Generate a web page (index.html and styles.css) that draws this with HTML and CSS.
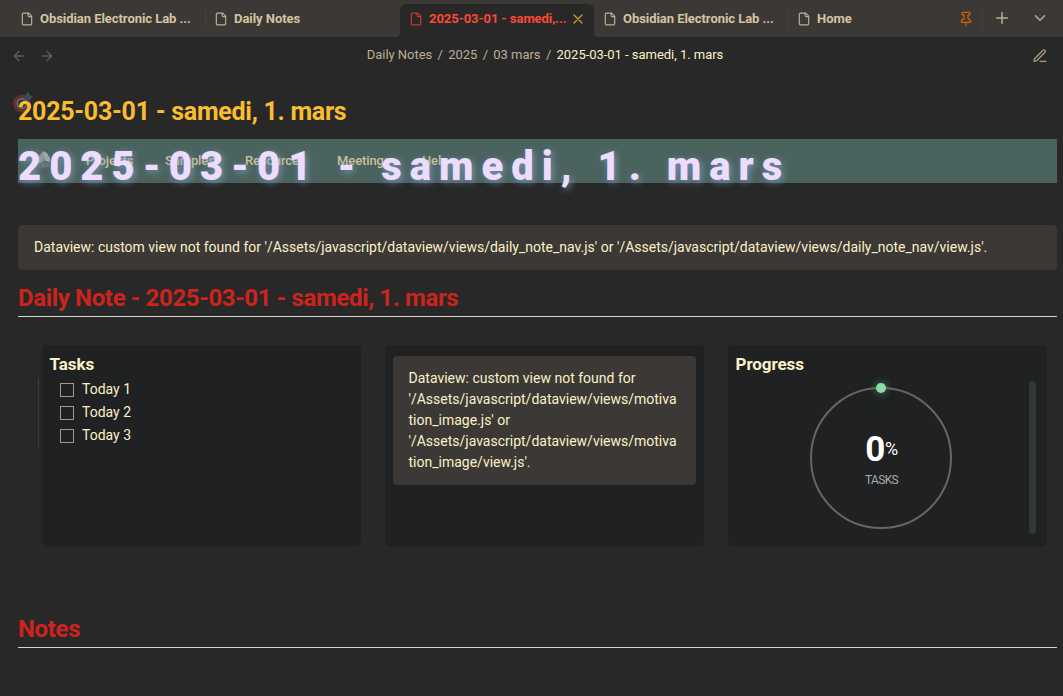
FILE: index.html
```
<!DOCTYPE html>
<html lang="fr">
<head>
<meta charset="utf-8">
<title>2025-03-01 - samedi, 1. mars</title>
<link rel="stylesheet" href="styles.css">
</head>
<body>
<svg class="sprite" aria-hidden="true">
  <symbol id="file" viewBox="0 0 24 24"><path d="M15 2H6a2 2 0 0 0-2 2v16a2 2 0 0 0 2 2h12a2 2 0 0 0 2-2V7Z"/><path d="M14 2v4a2 2 0 0 0 2 2h4"/></symbol>
</svg>
<div class="app">
  <header class="tabs">
    <div class="tab t1"><svg class="icon"><use href="#file"/></svg><span>Obsidian Electronic Lab ...</span></div>
    <div class="tab t2"><svg class="icon"><use href="#file"/></svg><span>Daily Notes</span></div>
    <div class="tab t3 active"><svg class="icon"><use href="#file"/></svg><span>2025-03-01 - samedi,...</span><svg class="close" viewBox="0 0 24 24"><path d="M18 6 6 18M6 6l12 12"/></svg></div>
    <div class="tab t4"><svg class="icon"><use href="#file"/></svg><span>Obsidian Electronic Lab ...</span></div>
    <div class="tab t5"><svg class="icon"><use href="#file"/></svg><span>Home</span><svg class="pin" viewBox="0 0 24 24"><path d="M12 17v5M9 10.76a2 2 0 0 1-1.11 1.79l-1.78.9A2 2 0 0 0 5 15.24V16a1 1 0 0 0 1 1h12a1 1 0 0 0 1-1v-.76a2 2 0 0 0-1.11-1.79l-1.78-.9A2 2 0 0 1 15 10.76V7a1 1 0 0 1 1-1 2 2 0 0 0 0-4H8a2 2 0 0 0 0 4 1 1 0 0 1 1 1z"/></svg></div>
    <div class="tab-tools"><svg class="plus" viewBox="0 0 24 24"><path d="M5 12h14M12 5v14"/></svg><svg class="chevron" viewBox="0 0 24 24"><path d="m6 9 6 6 6-6"/></svg></div>
  </header>
  <nav class="view-header">
    <div class="history"><svg viewBox="0 0 24 24"><path d="m12 19-7-7 7-7M19 12H5"/></svg><svg viewBox="0 0 24 24"><path d="M5 12h14M12 5l7 7-7 7"/></svg></div>
    <div class="crumbs"><span>Daily Notes</span><i>/</i><span>2025</span><i>/</i><span>03 mars</span><i>/</i><b>2025-03-01 - samedi, 1. mars</b></div>
    <div class="actions"><svg class="edit" viewBox="0 0 24 24"><path d="M12 20h9M16.5 3.5a2.12 2.12 0 0 1 3 3L7 19l-4 1 1-4Z"/></svg></div>
  </nav>
  <main class="note">
    <div class="title-wrap">
      <svg class="target" viewBox="0 0 22 22"><circle cx="9" cy="12.500" r="7.500" fill="none" stroke="#66302e" stroke-width="3"/><circle cx="9" cy="12.500" r="4.700" fill="none" stroke="#6c6867" stroke-width="2"/><circle cx="9" cy="12.500" r="2.500" fill="#66302e"/><path d="m9 12 6-6" stroke="#365b70" stroke-width="1.500"/><path d="m12 8 1-5 3-2v3l4 1-3 4z" fill="#31506a"/></svg>
      <h1 class="title">2025-03-01 - samedi, 1. mars</h1>
    </div>
    <div class="banner">
      <div class="menu">
        <svg class="logo" viewBox="0 0 14 18"><path d="M1 8 6 1l2 4-1 6-5 3z" fill="#8c9895"/><path d="m6 1 4 2 3 5v4l-5-1-1-5z" fill="#a0a8a6"/><path d="m4 14 4-2 5 1-1 4-7 1z" fill="#6c7275"/></svg>
        <span class="m1">Projects</span><span class="m2">Samples</span><span class="m3">Resources</span><span class="m4">Meetings</span><span class="m5">Help</span>
      </div>
      <div class="display">2025-03-01 - samedi, 1. mars</div>
    </div>
    <div class="error wide">Dataview: custom view not found for '/Assets/javascript/dataview/views/daily_note_nav.js' or '/Assets/javascript/dataview/views/daily_note_nav/view.js'.</div>
    <h2 class="section daily">Daily Note - 2025-03-01 - samedi, 1. mars</h2>
    <div class="columns">
      <section class="card tasks"><h3>Tasks</h3>
        <ul><li><span class="box"></span><span>Today 1</span></li><li><span class="box"></span><span>Today 2</span></li><li><span class="box"></span><span>Today 3</span></li></ul>
      </section>
      <section class="card motivation"><div class="error small">Dataview: custom view not found for '/Assets/javascript/dataview/views/motivation_image.js' or '/Assets/javascript/dataview/views/motivation_image/view.js'.</div></section>
      <section class="card progress"><h3>Progress</h3>
        <div class="progress-body">
          <div class="ring"><span class="dot"></span><div class="value"><strong>0</strong><span>%</span></div><div class="label">TASKS</div></div>
          <div class="scrollbar"></div>
        </div>
      </section>
    </div>
    <h2 class="section notes">Notes</h2>
  </main>
</div>
</body>
</html>
```
FILE: styles.css
```
* { box-sizing: border-box; }
body { margin: 0; background: #282828; color: #fbf1c7; font-family: Roboto, sans-serif; font-size: 14px; overflow: hidden; }
svg { fill: none; stroke: currentColor; stroke-width: 2; stroke-linecap: round; stroke-linejoin: round; flex: none; }
.sprite { position: absolute; width: 0; height: 0; }
.app { height: 696px; overflow: hidden; }
.tabs { display: flex; height: 37px; background: #3c3836; color: #d5c4a1; font-size: 13px; font-weight: 700; letter-spacing: -0.050px; }
.tab { display: flex; align-items: center; height: 37px; position: relative; white-space: nowrap; }
.icon { width: 14px; height: 14px; margin-right: 6px; color: #bdae93; }
.t1 { width: 206px; padding-left: 20px; }
.t2 { width: 194px; padding-left: 8px; }
.t3 { width: 194px; padding-left: 9px; }
.t4 { width: 195px; padding-left: 9px; }
.t5 { width: 194px; padding-left: 8px; }
.t1::before, .t4::before, .t5::before { content: ""; position: absolute; right: 0; top: 10px; width: 1px; height: 19px; background: #45403d; }
.active { height: 33px; margin-top: 4px; padding-bottom: 4px; background: #282828; border-radius: 6px 6px 0 0; color: #fb4934; }
.active::before, .active::after { content: ""; position: absolute; bottom: 0; width: 5px; height: 5px; }
.active::before { left: -5px; background: radial-gradient(circle at 0 0, #3c3836 5px, #282828 5.500px); }
.active::after { right: -5px; background: radial-gradient(circle at 100% 0, #3c3836 5px, #282828 5.500px); }
.active .icon { color: #cc372b; }
.close { width: 16px; height: 16px; margin-left: 3px; color: #d79921; }
.pin { width: 16px; height: 16px; margin-left: auto; margin-right: 9px; color: #d65d0e; }
.tab-tools { display: flex; align-items: center; flex: 1; padding: 0 14px 2px 10px; justify-content: space-between; color: #bdae93; }
.plus { width: 18px; height: 18px; }
.chevron { width: 18px; height: 18px; }
.view-header { display: flex; align-items: center; justify-content: space-between; height: 38px; padding: 0 15px 2px 11px; }
.history { display: flex; gap: 12px; width: 80px; color: #665c54; padding-top: 2px; }
.history svg { width: 16px; height: 16px; }
.crumbs { display: flex; font-size: 13px; color: #bdae93; margin: 0 0 2px 31px; letter-spacing: -0.030px; }
.crumbs i { font-style: normal; width: 16px; text-align: center; }
.crumbs b { font-weight: 400; color: #fbf1c7; }
.actions { display: flex; justify-content: flex-end; width: 80px; }
.edit { width: 16px; height: 16px; color: #a89984; margin-top: 2px; }
.note { padding: 20px 6px 0 18px; }
.title-wrap { position: relative; height: 44px; }
.title { position: relative; margin: 0; color: #fabd2f; font-size: 25px; line-height: 33px; font-weight: 700; letter-spacing: -0.270px; }
.target { position: absolute; left: -5px; top: -4px; width: 22px; height: 22px; stroke: none; }
.banner { position: relative; height: 44px; background: #4b635e; }
.menu { position: absolute; left: 0; top: 12px; height: 20px; color: #cbc199; font-size: 13px; line-height: 20px; font-weight: 500; letter-spacing: -0.100px; }
.menu span { position: absolute; }
.m1 { left: 68px; } .m2 { left: 147px; } .m3 { left: 227px; } .m4 { left: 319px; } .m5 { left: 404px; }
.logo { position: absolute; left: 19px; top: -1px; width: 14px; height: 18px; stroke: none; }
.display { position: relative; color: #eedcff; font-size: 40px; line-height: 56px; font-weight: 900; letter-spacing: 8px; text-shadow: 2px 2px 7px rgba(130,165,205,.75); white-space: nowrap; }
.error { background: #3c3836; border-radius: 4px; line-height: 21px; }
.wide { margin-top: 42px; height: 45px; padding: 12px 16px; white-space: nowrap; }
.section { margin: 0; color: #cc241d; font-weight: 700; font-size: 24px; line-height: 30px; letter-spacing: -0.350px; border-bottom: 1px solid #d5d5cd; }
.daily { margin-top: 13px; height: 34px; }
.columns { display: grid; grid-template-columns: repeat(3, 319px); gap: 24px; margin: 28px 0 0 24px; }
.card { height: 201px; padding: 8px; background: #1f2122; border-radius: 5px; position: relative; }
.card h3 { margin: 0 0 0 -0.500px; font-size: 17px; line-height: 23px; font-weight: 700; letter-spacing: -0.060px; }
.tasks::before { content: ""; position: absolute; left: -4px; top: 33px; width: 1px; height: 69px; background: #3d3b39; }
.tasks ul { margin: 2px 0 0; padding: 0 0 0 10px; list-style: none; }
.tasks li { display: flex; align-items: center; height: 23px; }
.tasks li span + span { margin-bottom: 2px; }
.box { width: 14px; height: 14px; margin: 1px 8px 0 0; border: 1px solid #a89984; }
.small { margin-top: 3px; height: 129px; padding: 12px 18px 12px 15.500px; overflow-wrap: anywhere; }
.progress-body { height: 165px; position: relative; }
.ring { width: 142px; height: 142px; margin-left: 74px; border: 2px solid #656667; border-radius: 50%; position: relative; top: 11px; display: flex; flex-direction: column; align-items: center; padding-top: 41px; }
.dot { position: absolute; left: 64px; top: -6px; width: 10px; height: 10px; border-radius: 50%; background: #8edba9; box-shadow: 0 0 10px #4a9064, 0 0 35px rgba(70,130,92,.2); }
.value { display: flex; color: #fff; line-height: 40px; margin-left: 1px; }
.value strong { font-size: 35px; letter-spacing: -0.500px; }
.value span { font-size: 18px; letter-spacing: -0.500px; line-height: 38px; }
.label { color: #aaa; font-size: 12px; line-height: 18px; margin-top: 1px; margin-left: 1px; letter-spacing: -0.700px; }
.scrollbar { position: absolute; right: 3px; top: 5px; width: 7px; height: 153px; background: #343738; border-radius: 4px; }
.notes { height: 37px; margin-top: 65px; line-height: 36px; }
```
